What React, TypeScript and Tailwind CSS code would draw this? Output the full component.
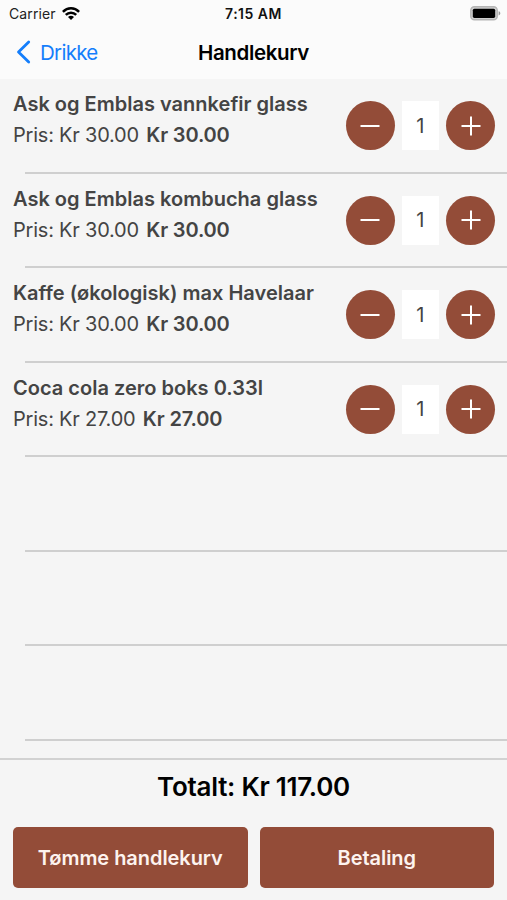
import { useState } from "react";

type CartItem = {
  name: string;
  price: number;
  quantity: number;
};

const initialItems: CartItem[] = [
  { name: "Ask og Emblas vannkefir glass", price: 30, quantity: 1 },
  { name: "Ask og Emblas kombucha glass", price: 30, quantity: 1 },
  { name: "Kaffe (økologisk) max Havelaar", price: 30, quantity: 1 },
  { name: "Coca cola zero boks 0.33l", price: 27, quantity: 1 },
];

const formatPrice = (value: number) => `Kr ${value.toFixed(2)}`;

function StatusBar() {
  return (
    <div className="grid h-[27px] grid-cols-3 items-center pl-[9px] pr-[6px] text-[14px] leading-[27px]">
      <div className="flex items-center gap-[6px] text-[#222]">
        <span className="tracking-[0.12px]">Carrier</span>
        <svg width="18" height="13" viewBox="0 0 18 13" fill="none" stroke="#000" strokeWidth="2.5">
          <path d="M0.9 4.8C5.5 0.2 12.5 0.2 17.1 4.8" />
          <path d="M3.8 7.9C6.7 5 11.3 5 14.2 7.9" />
          <path d="M6 10C7.7 8.4 10.3 8.4 12 10L9 13Z" fill="#000" stroke="none" />
        </svg>
      </div>
      <span className="-ml-[3px] text-center font-semibold tracking-[0.5px] text-[#111]">7:15 AM</span>
      <svg className="justify-self-end" width="31" height="15" viewBox="0 0 31 15">
        <rect x="0.8" y="0.8" width="26.4" height="13" rx="3.6" fill="#d0d0d0" stroke="#b5b5b5" strokeWidth="1.5" />
        <rect x="2.8" y="2.7" width="22.4" height="9.2" rx="1.6" fill="#000" />
        <path d="M28.6 5.2C30.9 5.8 30.9 8.8 28.6 9.4Z" fill="#999" />
      </svg>
    </div>
  );
}

function Header() {
  return (
    <header className="grid h-[52px] grid-cols-[1fr_auto_1fr] items-center px-4 text-[20.5px]">
      <button className="flex items-center gap-[9px] text-[#147efb]">
        <svg className="mb-[2px]" width="15" height="24" viewBox="0 0 15 24" fill="none" stroke="currentColor" strokeWidth="2.8" strokeLinecap="round" strokeLinejoin="round">
          <path d="M12.7 2L2.5 12L12.7 22" />
        </svg>
        <span className="tracking-[-0.7px]">Drikke</span>
      </button>
      <h1 className="font-semibold tracking-[-0.35px] text-black">Handlekurv</h1>
    </header>
  );
}

type RoundButtonProps = {
  label: string;
  path: string;
  onClick: () => void;
};

function RoundButton({ label, path, onClick }: RoundButtonProps) {
  return (
    <button
      aria-label={label}
      onClick={onClick}
      className="flex size-[49px] items-center justify-center rounded-full bg-[#934c38]"
    >
      <svg width="20" height="20" viewBox="0 0 20 20" fill="none" stroke="#fff" strokeWidth="2">
        <path d={path} />
      </svg>
    </button>
  );
}

type CartRowProps = {
  item: CartItem;
  onChange: (quantity: number) => void;
};

function CartRow({ item, onChange }: CartRowProps) {
  return (
    <div className="flex h-full justify-between pl-[13px] pr-3">
      <div className="pt-[10px] text-[20px] leading-[31px] text-[#444]">
        <p className="font-semibold tracking-[0.01px]">{item.name}</p>
        <p className="tracking-[-0.22px]">
          Pris: {formatPrice(item.price)}{" "}
          <span className="ml-[2px] font-semibold tracking-[-0.16px]">
            {formatPrice(item.price * item.quantity)}
          </span>
        </p>
      </div>
      <div className="flex items-start gap-[7.5px] pt-[22px]">
        <RoundButton
          label="Færre"
          path="M0.5 10H19.5"
          onClick={() => onChange(Math.max(0, item.quantity - 1))}
        />
        <span className="flex h-[49px] w-[36.5px] items-center justify-center bg-white text-[20px] text-[#444]">
          {item.quantity}
        </span>
        <RoundButton
          label="Flere"
          path="M0.5 10H19.5M10 0.5V19.5"
          onClick={() => onChange(item.quantity + 1)}
        />
      </div>
    </div>
  );
}

export default function App() {
  const [items, setItems] = useState<CartItem[]>(initialItems);

  const total = items.reduce((sum, item) => sum + item.price * item.quantity, 0);
  const emptyRows = Math.max(0, 7 - items.length);

  const handleChange = (index: number, quantity: number) => {
    setItems((prev) => prev.map((item, i) => (i === index ? { ...item, quantity } : item)));
  };

  return (
    <div className="flex h-[900px] w-[507px] flex-col overflow-hidden bg-[#f5f5f5] font-['Inter',sans-serif]">
      <div className="bg-[#fbfbfb]">
        <StatusBar />
        <Header />
      </div>

      <main className="h-[679px] overflow-hidden">
        {items.map((item, index) => (
          <div key={item.name} className="flex h-[94.5px] flex-col">
            <div className="flex-1">
              <CartRow item={item} onChange={(quantity) => handleChange(index, quantity)} />
            </div>
            <div className="ml-[25px] h-[2px] shrink-0 bg-[#cfcfcf]" />
          </div>
        ))}
        {Array.from({ length: emptyRows }, (_, index) => (
          <div key={index} className="flex h-[94.5px] flex-col justify-end">
            <div className="ml-[25px] h-[2px] bg-[#cfcfcf]" />
          </div>
        ))}
      </main>

      <footer className="flex-1 border-t-2 border-[#d2d2d2] px-[13px]">
        <p className="pt-[11px] text-center text-[26px] font-semibold leading-8 tracking-[-0.25px] text-black">
          Totalt: {formatPrice(total)}
        </p>
        <div className="grid grid-cols-2 gap-3 pt-6 text-[20px] font-semibold text-[#fdf3ef]">
          <button
            onClick={() => setItems([])}
            className="h-[61px] rounded-[5px] bg-[#934c38] tracking-[-0.05px]"
          >
            Tømme handlekurv
          </button>
          <button className="h-[61px] rounded-[5px] bg-[#934c38] tracking-[-0.05px]">Betaling</button>
        </div>
      </footer>
    </div>
  );
}
